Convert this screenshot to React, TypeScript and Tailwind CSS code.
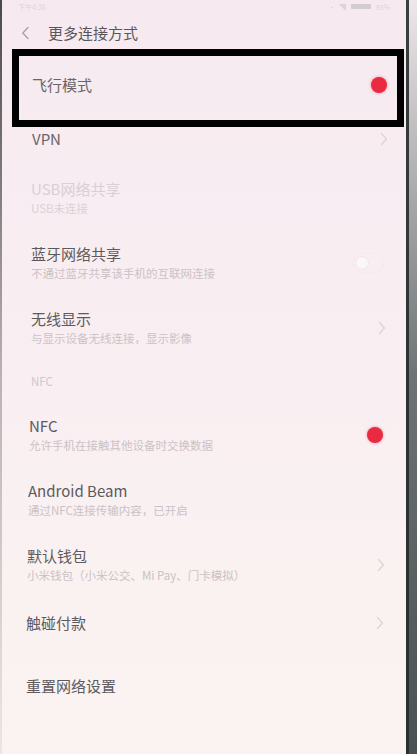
import { ReactNode } from 'react';

type Row = {
  title: string;
  sub?: string;
  h: string;
  pl: string;
  pr: string;
  disabled?: boolean;
  right?: 'chevron' | 'dot' | 'toggle';
};

const rows: Row[] = [
  { title: 'USB网络共享', sub: 'USB未连接', h: 'h-[65px]', pl: 'pl-[29px]', pr: 'pr-[20px]', disabled: true },
  { title: '蓝牙网络共享', sub: '不通过蓝牙共享该手机的互联网连接', h: 'h-[65px]', pl: 'pl-[29px]', pr: 'pr-[22px]', right: 'toggle' },
  { title: '无线显示', sub: '与显示设备无线连接，显示影像', h: 'h-[65px]', pl: 'pl-[29px]', pr: 'pr-[20px]', right: 'chevron' },
];

const nfcRows: Row[] = [
  { title: 'NFC', sub: '允许手机在接触其他设备时交换数据', h: 'h-[65px]', pl: 'pl-[27px]', pr: 'pr-[23px]', right: 'dot' },
  { title: 'Android Beam', sub: '通过NFC连接传输内容，已开启', h: 'h-[65px]', pl: 'pl-[26px]', pr: 'pr-[22px]' },
  { title: '默认钱包', sub: '小米钱包（小米公交、Mi Pay、门卡模拟）', h: 'h-[65px]', pl: 'pl-[25px]', pr: 'pr-[21px]', right: 'chevron' },
  { title: '触碰付款', h: 'h-[52px]', pl: 'pl-[24px]', pr: 'pr-[22px]', right: 'chevron' },
  { title: '重置网络设置', h: 'h-[74px]', pl: 'pl-[24px]', pr: 'pr-[25px]' },
];

function Chevron() {
  return (
    <svg width="8" height="14" viewBox="0 0 8 14" fill="none">
      <path d="M1.5 1.5 L6.5 7 L1.5 12.5" stroke="#ddd4d8" strokeWidth="1.3" strokeLinecap="round" strokeLinejoin="round" />
    </svg>
  );
}

function Dot() {
  return <div className="w-[16px] h-[16px] rounded-full bg-[#ea2a40] shadow-[0_0_3px_rgba(234,42,64,0.5)]" />;
}

function Toggle() {
  return (
    <div className="w-[32px] h-[20px] rounded-full border border-[#f3ebee] flex items-center px-[2px]">
      <div className="w-[14px] h-[14px] rounded-full border border-[#efe6ea] bg-[#fbf6f8]" />
    </div>
  );
}

function Right({ kind }: { kind?: Row['right'] }) {
  if (kind === 'chevron') return <Chevron />;
  if (kind === 'dot') return <Dot />;
  if (kind === 'toggle') return <Toggle />;
  return null;
}

function Item({ row }: { row: Row }): ReactNode {
  return (
    <div className={`flex items-center justify-between ${row.h} ${row.pl} ${row.pr}`}>
      <div className="flex flex-col gap-[1px]">
        <span className={`text-[15px] leading-[20px] ${row.disabled ? 'text-[#d9cfd4]' : 'text-[#5d5a5c]'}`}>{row.title}</span>
        {row.sub && (
          <span className={`text-[11.5px] leading-[17px] ${row.disabled ? 'text-[#dcd2d7]' : 'text-[#cbc2c6]'}`}>{row.sub}</span>
        )}
      </div>
      <Right kind={row.right} />
    </div>
  );
}

export default function App() {
  return (
    <div className="w-[417px] h-[754px] overflow-hidden flex bg-gradient-to-b from-[#f6eaf0] via-[#f9eff2] to-[#fbf3f1] font-['Noto_Sans_CJK_SC','Noto_Sans',sans-serif]">
      {/* left edge of the handset */}
      <div className="w-[2px] bg-gradient-to-b from-[#4a4a4d] via-[#b9b3b6] to-[#ece4e6]" />

      <div className="flex-1 flex flex-col">
        {/* status bar */}
        <div className="h-[17px] flex justify-between items-start px-[16px] pt-[2px]">
          <span className="text-[7px] leading-[10px] text-[#ddd4d8]">下午4:36</span>
          <div className="flex items-start gap-[5px] text-[7px] leading-[10px] text-[#ddd4d8]">
            <span>◔</span>
            <span>◥</span>
            <div className="w-[20px] h-[5px] mt-[2px] bg-[#d4ccd0] rounded-[1px]" />
            <span>85%</span>
          </div>
        </div>

        {/* header */}
        <div className="h-[32px] flex items-center pl-[19px] gap-[18px]">
          <svg width="9" height="14" viewBox="0 0 9 14" fill="none">
            <path d="M7 1.5 L1.8 7 L7 12.5" stroke="#a8a0a4" strokeWidth="1.3" strokeLinecap="round" strokeLinejoin="round" />
          </svg>
          <span className="text-[15px] text-[#5a5658]">更多连接方式</span>
        </div>

        {/* airplane mode, outlined */}
        <div className="ml-[10px] mr-[2px] h-[78px] border-[7px] border-black flex items-center justify-between pl-[13px] pr-[10px] pb-[6px]">
          <span className="text-[15px] text-[#6a6568]">飞行模式</span>
          <Dot />
        </div>

        <div className="h-[24px] flex items-center justify-between pl-[30px] pr-[18px]">
          <span className="text-[15px] text-[#6a6568]">VPN</span>
          <Chevron />
        </div>
        <div className="h-[14px]" />

        {rows.map((r) => (
          <Item key={r.title} row={r} />
        ))}

        <div className="h-[42px] flex items-end pb-[12px] pl-[29px]">
          <span className="text-[11.5px] text-[#d0c7cb]">NFC</span>
        </div>

        {nfcRows.map((r) => (
          <Item key={r.title} row={r} />
        ))}
      </div>

      {/* right edge of the handset */}
      <div className="w-[11px] flex">
        <div className="w-[3px] bg-gradient-to-b from-[#3a3f40] via-[#2c3131] to-[#2a2f30]" />
        <div className="flex-1 bg-gradient-to-b from-[#efe7ea] via-[#6d7374] to-[#4a5152]" />
      </div>
    </div>
  );
}
